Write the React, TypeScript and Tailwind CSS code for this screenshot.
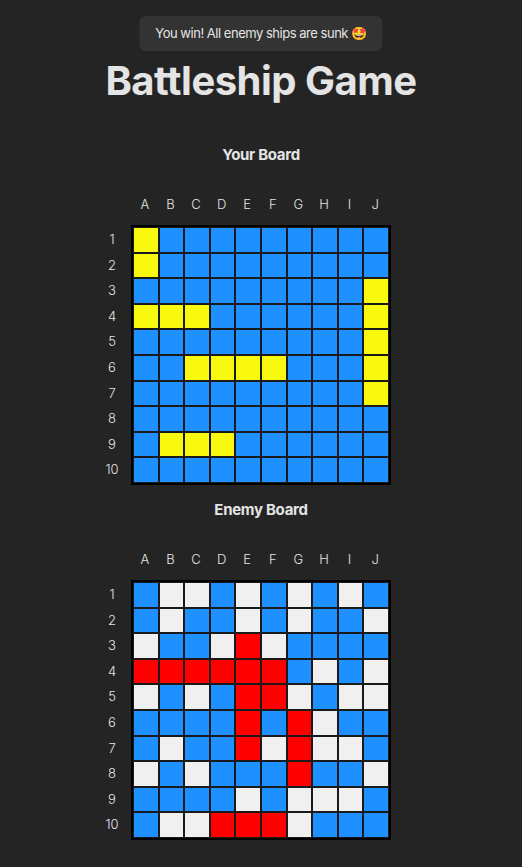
const COLUMNS = ['A', 'B', 'C', 'D', 'E', 'F', 'G', 'H', 'I', 'J'];

// b = water, s = ship, w = miss, r = hit
const yourBoard = [
  'sbbbbbbbbb',
  'sbbbbbbbbb',
  'bbbbbbbbbs',
  'sssbbbbbbs',
  'bbbbbbbbbs',
  'bbssssbbbs',
  'bbbbbbbbbs',
  'bbbbbbbbbb',
  'bsssbbbbbb',
  'bbbbbbbbbb',
];

const enemyBoard = [
  'bwwbwbwbwb',
  'bwbbwbwbbw',
  'wbbwrwbbbb',
  'rrrrrrbwbw',
  'wbwbrrwbww',
  'bbbbrbrwbb',
  'bwbbrwrwwb',
  'wbwbbbrbbw',
  'bbbbwbwwwb',
  'bwwrrrwbbb',
];

const cellColor: Record<string, string> = {
  b: 'bg-[#1e90ff]',
  s: 'bg-[#f9f90f]',
  w: 'bg-[#f0f0f0]',
  r: 'bg-[#ff0000]',
};

function Board({ title, rows }: { title: string; rows: string[] }) {
  return (
    <div className="flex flex-col items-center">
      <h2 className="text-[15px] leading-[22px] font-bold tracking-[-0.3px]">{title}</h2>
      <div className="mt-[27px] flex flex-col">
        <div className="ml-[1px] flex h-[22px]">
          {COLUMNS.map((c) => (
            <div key={c} className="w-[25.6px] text-center text-[13px] leading-[22px] font-light">
              {c}
            </div>
          ))}
        </div>
        <div className="mt-[10px] flex">
          <div className="mt-[2px] -ml-[31px] w-[31px]">
            {rows.map((_, i) => (
              <div key={i} className="flex h-[25.6px] items-center justify-center pr-[7px] text-[13px] font-light">
                {i + 1}
              </div>
            ))}
          </div>
          <div className="border-2 border-black">
            {rows.map((row, i) => (
              <div key={i} className="flex">
                {row.split('').map((cell, j) => (
                  <div key={j} className={`h-[25.6px] w-[25.6px] border border-[#1a1a1a] ${cellColor[cell]}`} />
                ))}
              </div>
            ))}
          </div>
        </div>
      </div>
    </div>
  );
}

export default function App() {
  return (
    <div className="relative min-h-[867px] bg-[#242424] font-['Inter',sans-serif] text-[#e4e4e4]">
      <div className="absolute top-4 left-1/2 flex h-[35px] -translate-x-1/2 items-center rounded-md bg-[#333333] px-4 text-[13px] tracking-[-0.48px] whitespace-nowrap">
        You win! All enemy ships are sunk 🤩
      </div>
      <div className="flex flex-col items-center pt-[53px]">
        <h1 className="text-[40px] leading-[56px] font-bold tracking-[-0.5px]">Battleship Game</h1>
        <div className="mt-[35px] flex flex-col gap-[14px]">
          <Board title="Your Board" rows={yourBoard} />
          <Board title="Enemy Board" rows={enemyBoard} />
        </div>
      </div>
    </div>
  );
}
